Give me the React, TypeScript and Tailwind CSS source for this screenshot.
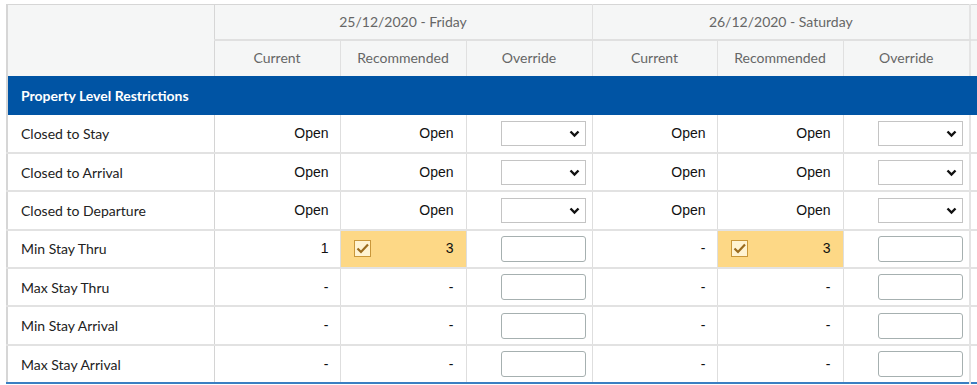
import { type FC } from "react"

type Row = {
  label: string
  kind: "select" | "input"
  days: { current: string; recommended: string; highlight?: boolean }[]
}

const rows: Row[] = [
  { label: "Closed to Stay", kind: "select", days: [{ current: "Open", recommended: "Open" }, { current: "Open", recommended: "Open" }] },
  { label: "Closed to Arrival", kind: "select", days: [{ current: "Open", recommended: "Open" }, { current: "Open", recommended: "Open" }] },
  { label: "Closed to Departure", kind: "select", days: [{ current: "Open", recommended: "Open" }, { current: "Open", recommended: "Open" }] },
  { label: "Min Stay Thru", kind: "input", days: [{ current: "1", recommended: "3", highlight: true }, { current: "-", recommended: "3", highlight: true }] },
  { label: "Max Stay Thru", kind: "input", days: [{ current: "-", recommended: "-" }, { current: "-", recommended: "-" }] },
  { label: "Min Stay Arrival", kind: "input", days: [{ current: "-", recommended: "-" }, { current: "-", recommended: "-" }] },
  { label: "Max Stay Arrival", kind: "input", days: [{ current: "-", recommended: "-" }, { current: "-", recommended: "-" }] },
]

const dates = ["25/12/2020 - Friday", "26/12/2020 - Saturday"]

const lato = "font-['Lato','Noto_Sans',sans-serif]"
const arial = "font-['Liberation_Sans',Arial,sans-serif]"

const Chevron: FC = () => (
  <svg width="11" height="8" viewBox="0 0 11 8" className="pointer-events-none absolute right-[6px] top-[9px]">
    <path d="M1.5 1.5 L5.5 5.5 L9.5 1.5" fill="none" stroke="#111" strokeWidth="2.4" />
  </svg>
)

const Check: FC = () => (
  <svg width="17" height="17" viewBox="0 0 17 17" className="shrink-0">
    <rect x="0.5" y="0.5" width="16" height="16" fill="#fff3d2" stroke="#c9973a" />
    <path d="M3.5 8.5 L7 12 L14 4.5" fill="none" stroke="#9a6b1f" strokeWidth="2.2" />
  </svg>
)

const OverrideCell: FC<{ kind: Row["kind"] }> = ({ kind }) => (
  <td className="border-r border-[#dedede] pr-[6px] text-right align-middle">
    {kind === "select" ? (
      <div className="relative ml-auto h-[25px] w-[85px]">
        <select className="h-full w-full appearance-none border border-[#c4c4c4] bg-white outline-none" />
        <Chevron />
      </div>
    ) : (
      <input
        type="text"
        className="ml-auto block h-[26px] w-[85px] rounded-[3px] border border-[#a6b0b0] bg-white outline-none"
      />
    )}
  </td>
)

export default function App() {
  return (
    <div className="min-h-screen overflow-hidden bg-white pl-[6px] pt-[4px]">
      <table className="table-fixed border-collapse border-l-2 border-t border-[#d6d6d6]" style={{ width: 1000 }}>
        <colgroup>
          <col style={{ width: 207 }} />
          <col style={{ width: 126 }} />
          <col style={{ width: 126 }} />
          <col style={{ width: 126 }} />
          <col style={{ width: 125 }} />
          <col style={{ width: 126 }} />
          <col style={{ width: 127 }} />
          <col />
        </colgroup>
        <thead className={`${lato} text-[14px] text-[#666]`}>
          <tr className="h-[35px] bg-[#f5f6f6]">
            <th rowSpan={2} className="border-r border-[#d6d6d6]" />
            {dates.map((d) => (
              <th key={d} colSpan={3} className="border-b-2 border-r border-[#e0e0e0] font-normal">
                {d}
              </th>
            ))}
            <th className="border-b-2 border-l-2 border-[#e4e4e4]" />
          </tr>
          <tr className="h-[36px] bg-[#f5f6f6]">
            {["Current", "Recommended", "Override", "Current", "Recommended", "Override"].map((h, i) => (
              <th key={i} className="border-r border-[#e0e0e0] pb-[2px] font-normal">
                {h}
              </th>
            ))}
            <th className="border-l-2 border-[#e4e4e4]" />
          </tr>
        </thead>
        <tbody>
          <tr className="h-[39px] bg-[#0054a4]">
            <td colSpan={8} className={`${lato} pl-[13px] text-[14px] font-bold text-white`}>
              Property Level Restrictions
            </td>
          </tr>
          {rows.map((r, ri) => (
            <tr
              key={r.label}
              className={`h-[38.4px] ${ri === rows.length - 1 ? "border-b-2 border-[#3a7fc2]" : "border-b-2 border-[#e2e2e2]"}`}
            >
              <td className={`${lato} border-r border-[#d4d4d4] pl-[13px] text-[14px] text-[#222]`}>{r.label}</td>
              {r.days.map((d, di) => (
                <>
                  <td key={`c${di}`} className={`${arial} border-r border-[#dedede] pr-[11px] text-right text-[14px] text-[#111]`}>
                    {d.current}
                  </td>
                  <td key={`r${di}`} className={`border-r border-[#dedede] p-0 ${arial} text-[14px] text-[#111]`}>
                    {d.highlight ? (
                      <div className="flex h-[36px] items-center justify-between bg-[#fdd886] pl-[13px] pr-[12px]">
                        <Check />
                        <span>{d.recommended}</span>
                      </div>
                    ) : (
                      <div className="pr-[12px] text-right">{d.recommended}</div>
                    )}
                  </td>
                  <OverrideCell key={`o${di}`} kind={r.kind} />
                </>
              ))}
              <td className="border-l-2 border-[#e4e4e4]" />
            </tr>
          ))}
        </tbody>
      </table>
    </div>
  )
}
